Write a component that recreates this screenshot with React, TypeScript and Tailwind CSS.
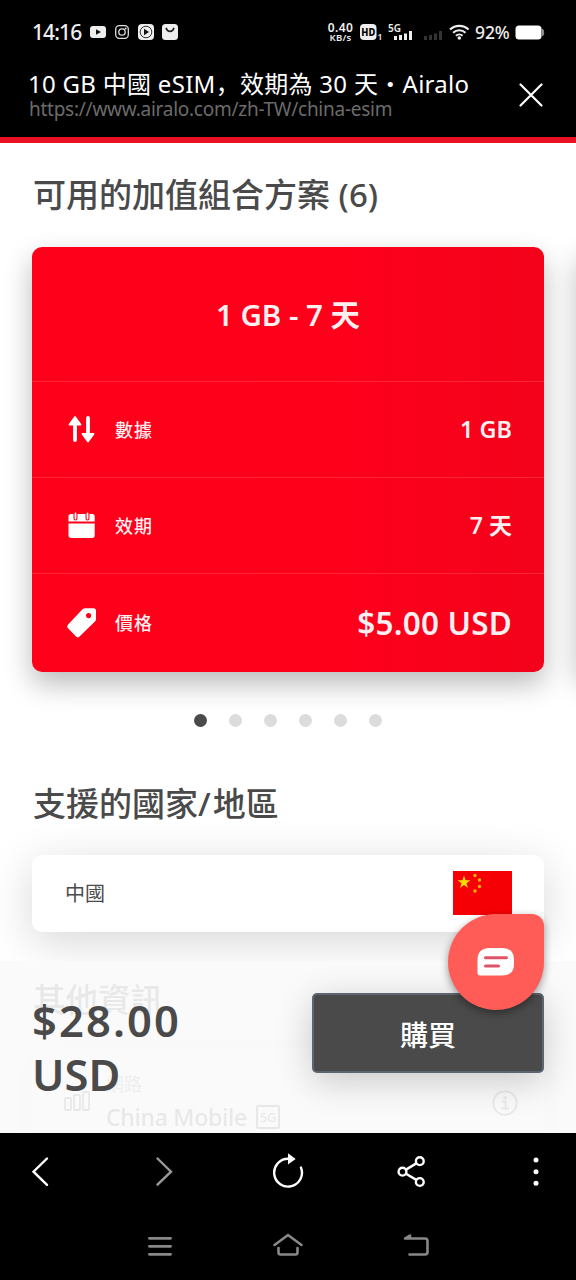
import type { ReactNode } from "react";
import clsx from "clsx";

const sans = "font-['Noto_Sans','Noto_Sans_CJK_TC',sans-serif]";

function StatusBar() {
  return (
    <div className="flex h-16 shrink-0 items-center pl-8 pr-[31px] text-[#eeeeee]">
      <span className="w-[58px] text-[21px] font-medium leading-none whitespace-nowrap tracking-[-0.9px]">14:16</span>
      <svg className="block" width="90" height="18" viewBox="90 23 90 18">
        <rect x="90" y="26" width="16" height="12" rx="3" fill="#eee" />
        <path d="M96 29.2v5.6l5-2.8z" fill="#111" />
        <g fill="none" stroke="#ddd" strokeWidth="1.3">
          <rect x="115.7" y="25.7" width="12.6" height="12.6" rx="3.5" />
          <circle cx="122" cy="32" r="3.2" />
        </g>
        <circle cx="125.6" cy="28.4" r="1" fill="#ddd" />
        <rect x="138" y="24" width="16" height="16" rx="4" fill="#eee" />
        <circle cx="146" cy="32" r="5.8" fill="none" stroke="#333" strokeWidth="1" />
        <path d="M144 28.8v6.4l5-3.2z" fill="#111" />
        <rect x="162" y="24" width="16" height="16" rx="3.5" fill="#eee" />
        <path d="M166.3 28.5c1.2 3.8 6.2 3.8 7.4 0" fill="none" stroke="#222" strokeWidth="1.8" strokeLinecap="round" />
      </svg>
      <div className="ml-auto flex items-center">
        <div className="mr-[4px] w-[29px] text-center font-semibold whitespace-nowrap">
          <div className="text-[12px] leading-[11px] tracking-[0.4px]">0.40</div>
          <div className="text-[9.5px] leading-[10px] tracking-[0.3px]">KB/s</div>
        </div>
        <svg className="block" width="116" height="24" viewBox="359 20 116 24" fontFamily="Noto Sans" fill="#eee">
          <rect x="360" y="24" width="16.5" height="16" rx="4" />
          <text x="361.3" y="36" fontSize="10.5" fontWeight="800" fill="#000" textLength="14" lengthAdjust="spacingAndGlyphs">HD</text>
          <text x="377.5" y="40" fontSize="8.5" fontWeight="600">1</text>
          <text x="388" y="31.5" fontSize="10" fontWeight="600" textLength="13">5G</text>
          <path d="M394 36h3v4h-3zM399 35h3v5h-3zM404 33.5h3v6.5h-3zM409 31h3v9h-3z" />
          <path d="M424 36h3v4h-3zM429 35h3v5h-3zM434 33.5h3v6.5h-3zM439 31h3v9h-3z" fill="#333" />
          <g fill="none" stroke="#eee" strokeWidth="2.1">
            <path d="M450 29.6a13.4 13.4 0 0 1 18.6 0" />
            <path d="M453.1 32.8a9 9 0 0 1 12.4 0" />
            <path d="M456 35.8a4.8 4.8 0 0 1 6.6 0" />
          </g>
          <circle cx="459.3" cy="38" r="1.8" />
        </svg>
        <span className="mt-[2px] w-[40px] text-[17.5px] font-medium leading-none tracking-[-0.1px]">92%</span>
        <svg className="block" width="30" height="16" viewBox="515 24 30 16">
          <rect x="515.5" y="25.5" width="26" height="14" rx="3.5" fill="#fff" />
          <path d="M542.3 29.2c1.8 0 1.8 6.6 0 6.6z" fill="#aaa" stroke="#999" />
        </svg>
      </div>
    </div>
  );
}

function BrowserHeader() {
  return (
    <div className="flex h-[73px] shrink-0 items-start justify-between pl-[28px] pr-[32px]">
      <div className="whitespace-nowrap">
        <div className="mt-[3px] text-[24px] leading-[32px] tracking-[0.29px] text-white">
          10 GB 中國 eSIM<span lang="zh-CN" className="font-['Noto_Sans_CJK_SC',sans-serif]">，</span>效期為 30 天
          <span className="font-['Noto_Sans_CJK_SC',sans-serif]">・</span>Airalo
        </div>
        <div className="mt-[-4px] ml-px text-[19px] leading-[26px] tracking-[-0.26px] text-[#6b6b6b]">https://www.airalo.com/zh-TW/china-esim</div>
      </div>
      <svg className="mt-[18px] block" width="26" height="26" viewBox="0 0 26 26" stroke="#fff" strokeWidth="2.2" strokeLinecap="round">
        <path d="M2.5 2.5l21 21M23.5 2.5l-21 21" />
      </svg>
    </div>
  );
}

interface PlanRowProps {
  icon: ReactNode;
  label: string;
  value: string;
  className?: string;
  valueClass: string;
}

function PlanRow({ icon, label, value, className, valueClass }: PlanRowProps) {
  return (
    <div className={clsx("flex items-center border-t border-white/15 pl-[33px] pr-8", className)}>
      {icon}
      <span className="ml-[17px] text-[18px] font-medium leading-none tracking-[1px]">{label}</span>
      <span className={clsx("ml-auto whitespace-nowrap font-semibold leading-none", valueClass)}>{value}</span>
    </div>
  );
}

function DataIcon() {
  return (
    <svg className="-mt-px" width="33" height="34" viewBox="65 412 33 34" fill="#fff" stroke="#fff" strokeLinejoin="round" strokeLinecap="round">
      <path d="M75 440V420M88 418v20" strokeWidth="3.8" fill="none" />
      <path d="M69.5 424.5l5.5-7.5 5.5 7.5zM82.5 434l5.5 7.5 5.5-7.5z" strokeWidth="1.8" />
    </svg>
  );
}

function CalendarIcon() {
  return (
    <svg className="-mt-px" width="33" height="34" viewBox="65 508 33 34">
      <path d="M68.5 521.6v-5.1q0-2.5 2.5-2.5h21.2q2.5 0 2.5 2.5v5.1zM68.5 523.4h26.2v11.9q0 2.7-2.7 2.7H71.2q-2.7 0-2.7-2.7z" fill="#fff" />
      <g fill="none" strokeLinecap="round">
        <path d="M75.5 514.5v4M87.5 514.5v4" stroke="#f0001b" strokeWidth="4" />
        <path d="M75.5 513.5v5M87.5 513.5v5" stroke="#fff" strokeWidth="1.8" />
      </g>
    </svg>
  );
}

function TagIcon() {
  return (
    <svg width="33" height="34" viewBox="65 606 33 34">
      <path
        fillRule="evenodd"
        d="M82.5 609.3q1.2-1 2.5-1h8.5q2.5 0 2.5 2.5v8.2q0 1.5-1 2.6L79.5 636.5q-1.8 1.7-3.5 0l-8.2-8.5q-1.5-1.8.3-3.5zM88.6 613a2.6 2.6 0 1 0 0 5.2 2.6 2.6 0 0 0 0-5.2z"
        fill="#fff"
      />
    </svg>
  );
}

function PlanCard() {
  return (
    <div className="h-[425px] w-[512px] shrink-0 overflow-hidden rounded-[10px] bg-linear-to-r from-[#ff001b] from-60% to-[#f3021b] text-white/95">
      <div className="flex h-[134px] items-center justify-center text-[29.5px] font-semibold">
        <span className="mt-[2px] leading-none">1 GB - 7 天</span>
      </div>
      <PlanRow icon={<DataIcon />} label="數據" value="1 GB" className="h-24" valueClass="text-[23.5px]" />
      <PlanRow icon={<CalendarIcon />} label="效期" value="7 天" className="h-24" valueClass="text-[23px]" />
      <PlanRow icon={<TagIcon />} label="價格" value="$5.00 USD" className="h-[99px]" valueClass="text-[31.5px] tracking-[0.2px]" />
    </div>
  );
}

function Flag() {
  return (
    <svg className="mt-4" width="59" height="44" viewBox="0 0 59 44">
      <rect width="59" height="44" fill="#f50005" />
      <path d="M11 4.5l1.6 4.7h4.9l-4 3 1.5 4.8-4-2.9-4 2.9 1.5-4.8-4-3h4.9z" fill="#ffd800" />
      <g fill="#f9b500">
        <circle cx="22" cy="4.5" r="1.7" />
        <circle cx="26.5" cy="9" r="1.7" />
        <circle cx="26.5" cy="15.5" r="1.7" />
        <circle cx="22" cy="20" r="1.7" />
      </g>
    </svg>
  );
}

function OtherInfo() {
  return (
    <>
      <h2 className="mt-[48px] pl-px text-[32.5px] font-medium leading-[40px]">其他資訊</h2>
      <div className="mt-[27px] flex h-[130px] rounded-[10px] bg-white pl-8 pr-[26px] shadow-[0_6px_40px_rgba(0,0,0,0.14)]">
        <svg className="mt-[44px]" width="28" height="22" viewBox="0 0 28 22" fill="none" stroke="#4a4a4a" strokeWidth="1.8">
          <rect x="1" y="7" width="6" height="12" rx="1" />
          <rect x="10" y="4" width="6" height="15" rx="1" />
          <rect x="19" y="1" width="6" height="18" rx="1" />
        </svg>
        <div className="ml-[14px] mt-[26px] whitespace-nowrap">
          <div className="text-[18px] leading-[22px] opacity-70">網路</div>
          <div className="mt-[5px] flex items-center text-[23px] font-medium leading-[34px] tracking-[-0.25px]">
            <span className="w-[150px]">China Mobile</span>
            <span className="flex size-[24px] items-center justify-center rounded-[2px] border-2 border-[#4a4a4a] text-[13px] leading-none">5G</span>
          </div>
        </div>
        <svg className="ml-auto mt-[43px]" width="26" height="26" viewBox="0 0 26 26" fill="none" stroke="#4a4a4a" strokeWidth="1.8">
          <circle cx="13" cy="13" r="11.7" />
          <path d="M10 11.5h3.5V18M9.500 18.500h7.500" />
          <circle cx="13" cy="7.8" r="0.8" fill="#4a4a4a" />
        </svg>
      </div>
    </>
  );
}

function ChatBubble() {
  return (
    <button className="absolute left-[448px] top-[-47px] flex size-24 items-center justify-center rounded-[48px] rounded-tr-[12px] bg-[#ff5c57] shadow-[0_3px_9px_rgba(0,0,0,0.4)]">
      <svg width="38" height="28" viewBox="0 0 38 28">
        <path d="M13 0h12q12 0 12 12v4q0 11.5-12 11.5H3q-2.5 0-2.5-2.5V12Q.5 0 13 0z" fill="#fff" />
        <path d="M8.5 9.8h21M8.5 18h13" stroke="#df5368" strokeWidth="3" strokeLinecap="round" />
      </svg>
    </button>
  );
}

function PurchaseBar() {
  return (
    <div className="absolute inset-x-0 bottom-0 flex h-[172px] justify-between bg-[#fafafa]/90 px-8">
      <div className="mt-[32px] w-[170px] text-[43.5px] font-semibold leading-[54px] text-[#4a4a4a]">
        <span className="tracking-[2.1px]">$28.00</span> USD
      </div>
      <button className="mt-8 h-20 w-[232px] rounded-[5px] border-2 border-[#5d6670] bg-[#4a4a4a] pt-[3px] text-[28px] font-medium leading-none text-white shadow-[0_8px_36px_rgba(0,0,0,0.2)]">
        購買
      </button>
      <ChatBubble />
    </div>
  );
}

function BrowserToolbar() {
  return (
    <div className="flex h-[78px] items-center justify-between px-[24px]">
      <svg width="32" height="40" viewBox="24 1152 32 40" fill="none" stroke="#fff" strokeWidth="2.4" strokeLinecap="round">
        <path d="M47 1158.500l-13.500 13.200 13.500 13.200" />
      </svg>
      <svg width="32" height="40" viewBox="148 1152 32 40" fill="none" stroke="#999" strokeWidth="2.4" strokeLinecap="round">
        <path d="M157.500 1158.500l13.500 13.200-13.500 13" />
      </svg>
      <svg width="32" height="40" viewBox="272 1152 32 40" fill="none" stroke="#fff" strokeWidth="2.4" strokeLinecap="round">
        <path d="M301 1167.600a13.900 13.900 0 1 1-13-8.800" />
        <path d="M288 1153.300l7.700 5.700-7.700 5.500z" fill="#fff" stroke="none" />
      </svg>
      <svg width="32" height="40" viewBox="396 1152 32 40" fill="none" stroke="#fff" strokeWidth="2.4">
        <circle cx="402.500" cy="1171.700" r="3.900" />
        <circle cx="419.800" cy="1161.200" r="3.900" />
        <circle cx="419.800" cy="1182" r="3.900" />
        <path d="M406 1169.600l10.300-6.200M406 1173.800l10.300 6.100" />
      </svg>
      <svg width="32" height="40" viewBox="520 1152 32 40" fill="#fff">
        <circle cx="536" cy="1160" r="2.500" />
        <circle cx="536" cy="1171.700" r="2.500" />
        <circle cx="536" cy="1183.300" r="2.500" />
      </svg>
    </div>
  );
}

function SystemNav() {
  return (
    <div className="flex h-[69px] items-center justify-center gap-24">
      <svg width="32" height="30" viewBox="144 1231 32 30" fill="none" stroke="#888" strokeWidth="2.8" strokeLinecap="round">
        <path d="M149.400 1238.300h21.200M149.400 1246.300h21.200M149.400 1254.300h21.200" />
      </svg>
      <svg width="32" height="30" viewBox="272 1231 32 30" fill="none" stroke="#888" strokeWidth="2.6" strokeLinecap="round">
        <path d="M274.500 1245l13.500-10 13.500 10M278.500 1248v4.500q0 2 2 2h15q2 0 2-2v-4.500" />
      </svg>
      <svg width="32" height="30" viewBox="400 1231 32 30" fill="none" stroke="#888" strokeWidth="2.6" strokeLinecap="round" strokeLinejoin="round">
        <path d="M409.500 1254.500H425q2.500 0 2.500-2.500v-11q0-2.500-2.500-2.500h-20l5-3v3" />
      </svg>
    </div>
  );
}

const slides = [0, 1, 2, 3, 4, 5];

export default function App() {
  return (
    <div className={clsx("flex h-[1280px] w-[576px] flex-col overflow-hidden bg-black", sans)}>
      <StatusBar />
      <BrowserHeader />
      <main className="relative flex-1 overflow-hidden border-t-[6px] border-[#e71024] bg-white text-[#4a4a4a]">
        <div className="px-8">
          <h2 className="mt-[31px] whitespace-nowrap pl-px text-[33px] font-medium leading-[42px]">可用的加值組合方案 (6)</h2>
          <div className="mt-[31px] flex gap-[34px]">
            <div className="rounded-[10px] shadow-[0_12px_28px_rgba(0,0,0,0.27)]">
              <PlanCard />
            </div>
            <div className="h-[425px] w-[512px] shrink-0 rounded-[10px] bg-white shadow-[0_12px_28px_rgba(0,0,0,0.27)]" />
          </div>
          <div className="mt-[42px] flex justify-center gap-[22.2px]">
            {slides.map((slide) => (
              <span key={slide} className={clsx("size-[13px] rounded-full", slide === 0 ? "bg-[#4a4a4a]" : "bg-[#dcdcdc]")} />
            ))}
          </div>
          <h2 className="mt-[56px] whitespace-nowrap pl-px text-[33px] font-medium leading-[42px]">
            支援的國家<span className="tracking-[2px]">/</span>地區
          </h2>
          <div className="mt-[30px] flex h-[77px] justify-between rounded-[10px] bg-white px-8 shadow-[0_10px_46px_rgba(0,0,0,0.16)]">
            <span className="pl-px text-[20px] leading-[78px]">中國</span>
            <Flag />
          </div>
          <OtherInfo />
        </div>
        <PurchaseBar />
      </main>
      <div className="h-[147px] shrink-0 bg-black">
        <BrowserToolbar />
        <SystemNav />
      </div>
    </div>
  );
}
